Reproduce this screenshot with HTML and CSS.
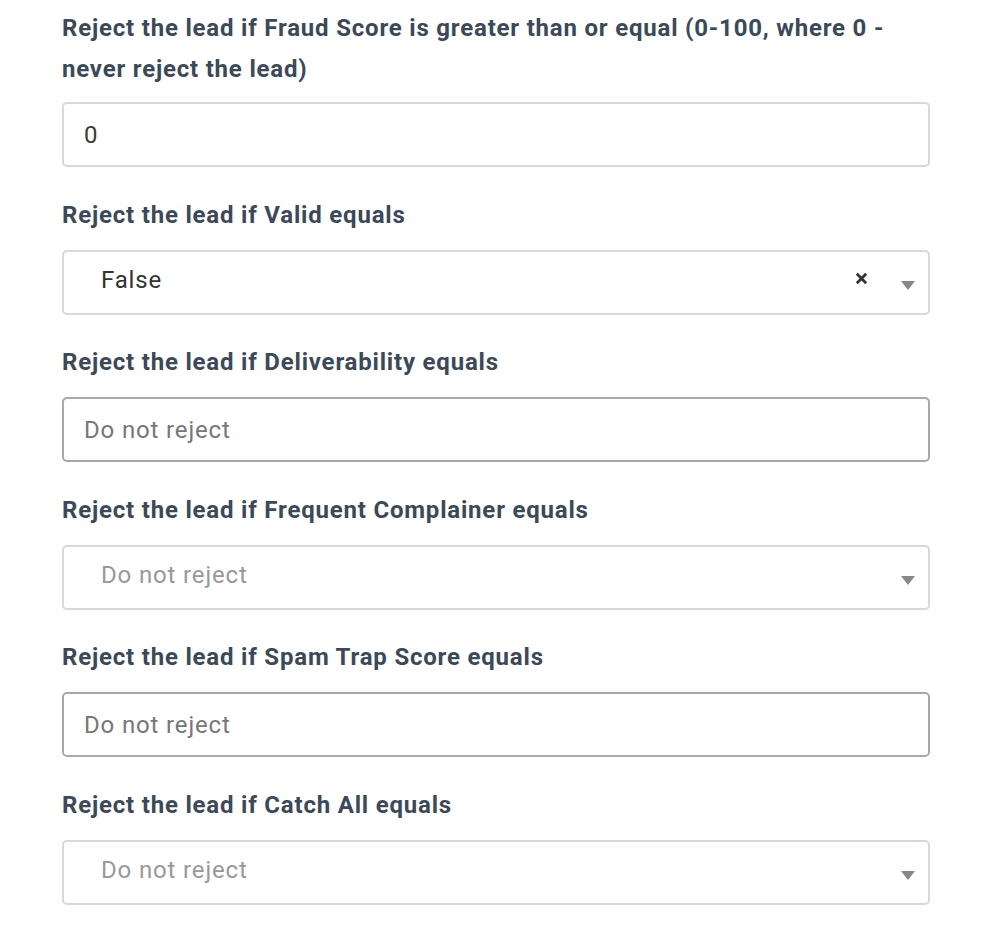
FILE: index.html
```html
<!DOCTYPE html>
<html>
<head>
<meta charset="utf-8">
<link rel="stylesheet" href="styles.css">
</head>
<body>
<div class="form">
  <div class="group first">
    <label class="label">Reject the lead if Fraud Score is greater than or equal (0-100, where 0 - never reject the lead)</label>
    <div class="input light"><span class="value">0</span></div>
  </div>
  <div class="group">
    <label class="label">Reject the lead if Valid equals</label>
    <div class="select">
      <span class="sel-value">False</span>
      <svg class="clear" width="13" height="13" viewBox="0 0 13 13"><path d="M1.8 1.8 L11.2 11.2 M11.2 1.8 L1.8 11.2" stroke="#333" stroke-width="2.8" stroke-linecap="butt"/></svg>
      <span class="arrow"></span>
    </div>
  </div>
  <div class="group">
    <label class="label">Reject the lead if Deliverability equals</label>
    <div class="input dark"><span class="placeholder">Do not reject</span></div>
  </div>
  <div class="group">
    <label class="label">Reject the lead if Frequent Complainer equals</label>
    <div class="select">
      <span class="sel-placeholder">Do not reject</span>
      <span class="arrow"></span>
    </div>
  </div>
  <div class="group">
    <label class="label">Reject the lead if Spam Trap Score equals</label>
    <div class="input dark"><span class="placeholder">Do not reject</span></div>
  </div>
  <div class="group">
    <label class="label">Reject the lead if Catch All equals</label>
    <div class="select">
      <span class="sel-placeholder">Do not reject</span>
      <span class="arrow"></span>
    </div>
  </div>
</div>
</body>
</html>
```
FILE: styles.css
```css
html, body {
  margin: 0;
  padding: 0;
  background: #ffffff;
}
body {
  font-family: Roboto, "Liberation Sans", sans-serif;
}
.form {
  width: 868px;
  margin-left: 62px;
  padding-top: 8px;
  display: flex;
  flex-direction: column;
  gap: 27.5px;
}
.group {
  display: flex;
  flex-direction: column;
  gap: 12px;
}
.group + .group {
  gap: 14px;
}
.label {
  font-size: 24px;
  line-height: 41px;
  font-weight: 700;
  letter-spacing: 0.8px;
  color: #3b4959;
}
.input, .select {
  box-sizing: border-box;
  height: 65px;
  border-radius: 5px;
  display: flex;
  align-items: center;
  font-size: 24px;
  letter-spacing: 0.85px;
  background: #fff;
}
.input {
  padding-left: 20px;
}
.input.light {
  border: 2px solid #d5d8dc;
}
.input.dark {
  border: 2px solid #a8a8a8;
}
.value {
  color: #3a3a3a;
}
.placeholder {
  color: #777777;
}
.select {
  border: 2px solid #d5d8dc;
  padding-left: 37px;
  padding-right: 13px;
  padding-bottom: 5px;
}
.sel-value {
  color: #333333;
  flex: 1;
}
.sel-placeholder {
  color: #999999;
  flex: 1;
}
.clear {
  margin-right: 33px;
  margin-top: -2px;
}
.arrow {
  width: 0;
  height: 0;
  border-left: 7px solid transparent;
  border-right: 7px solid transparent;
  border-top: 9px solid #888888;
  margin-top: 12px;
}
```
